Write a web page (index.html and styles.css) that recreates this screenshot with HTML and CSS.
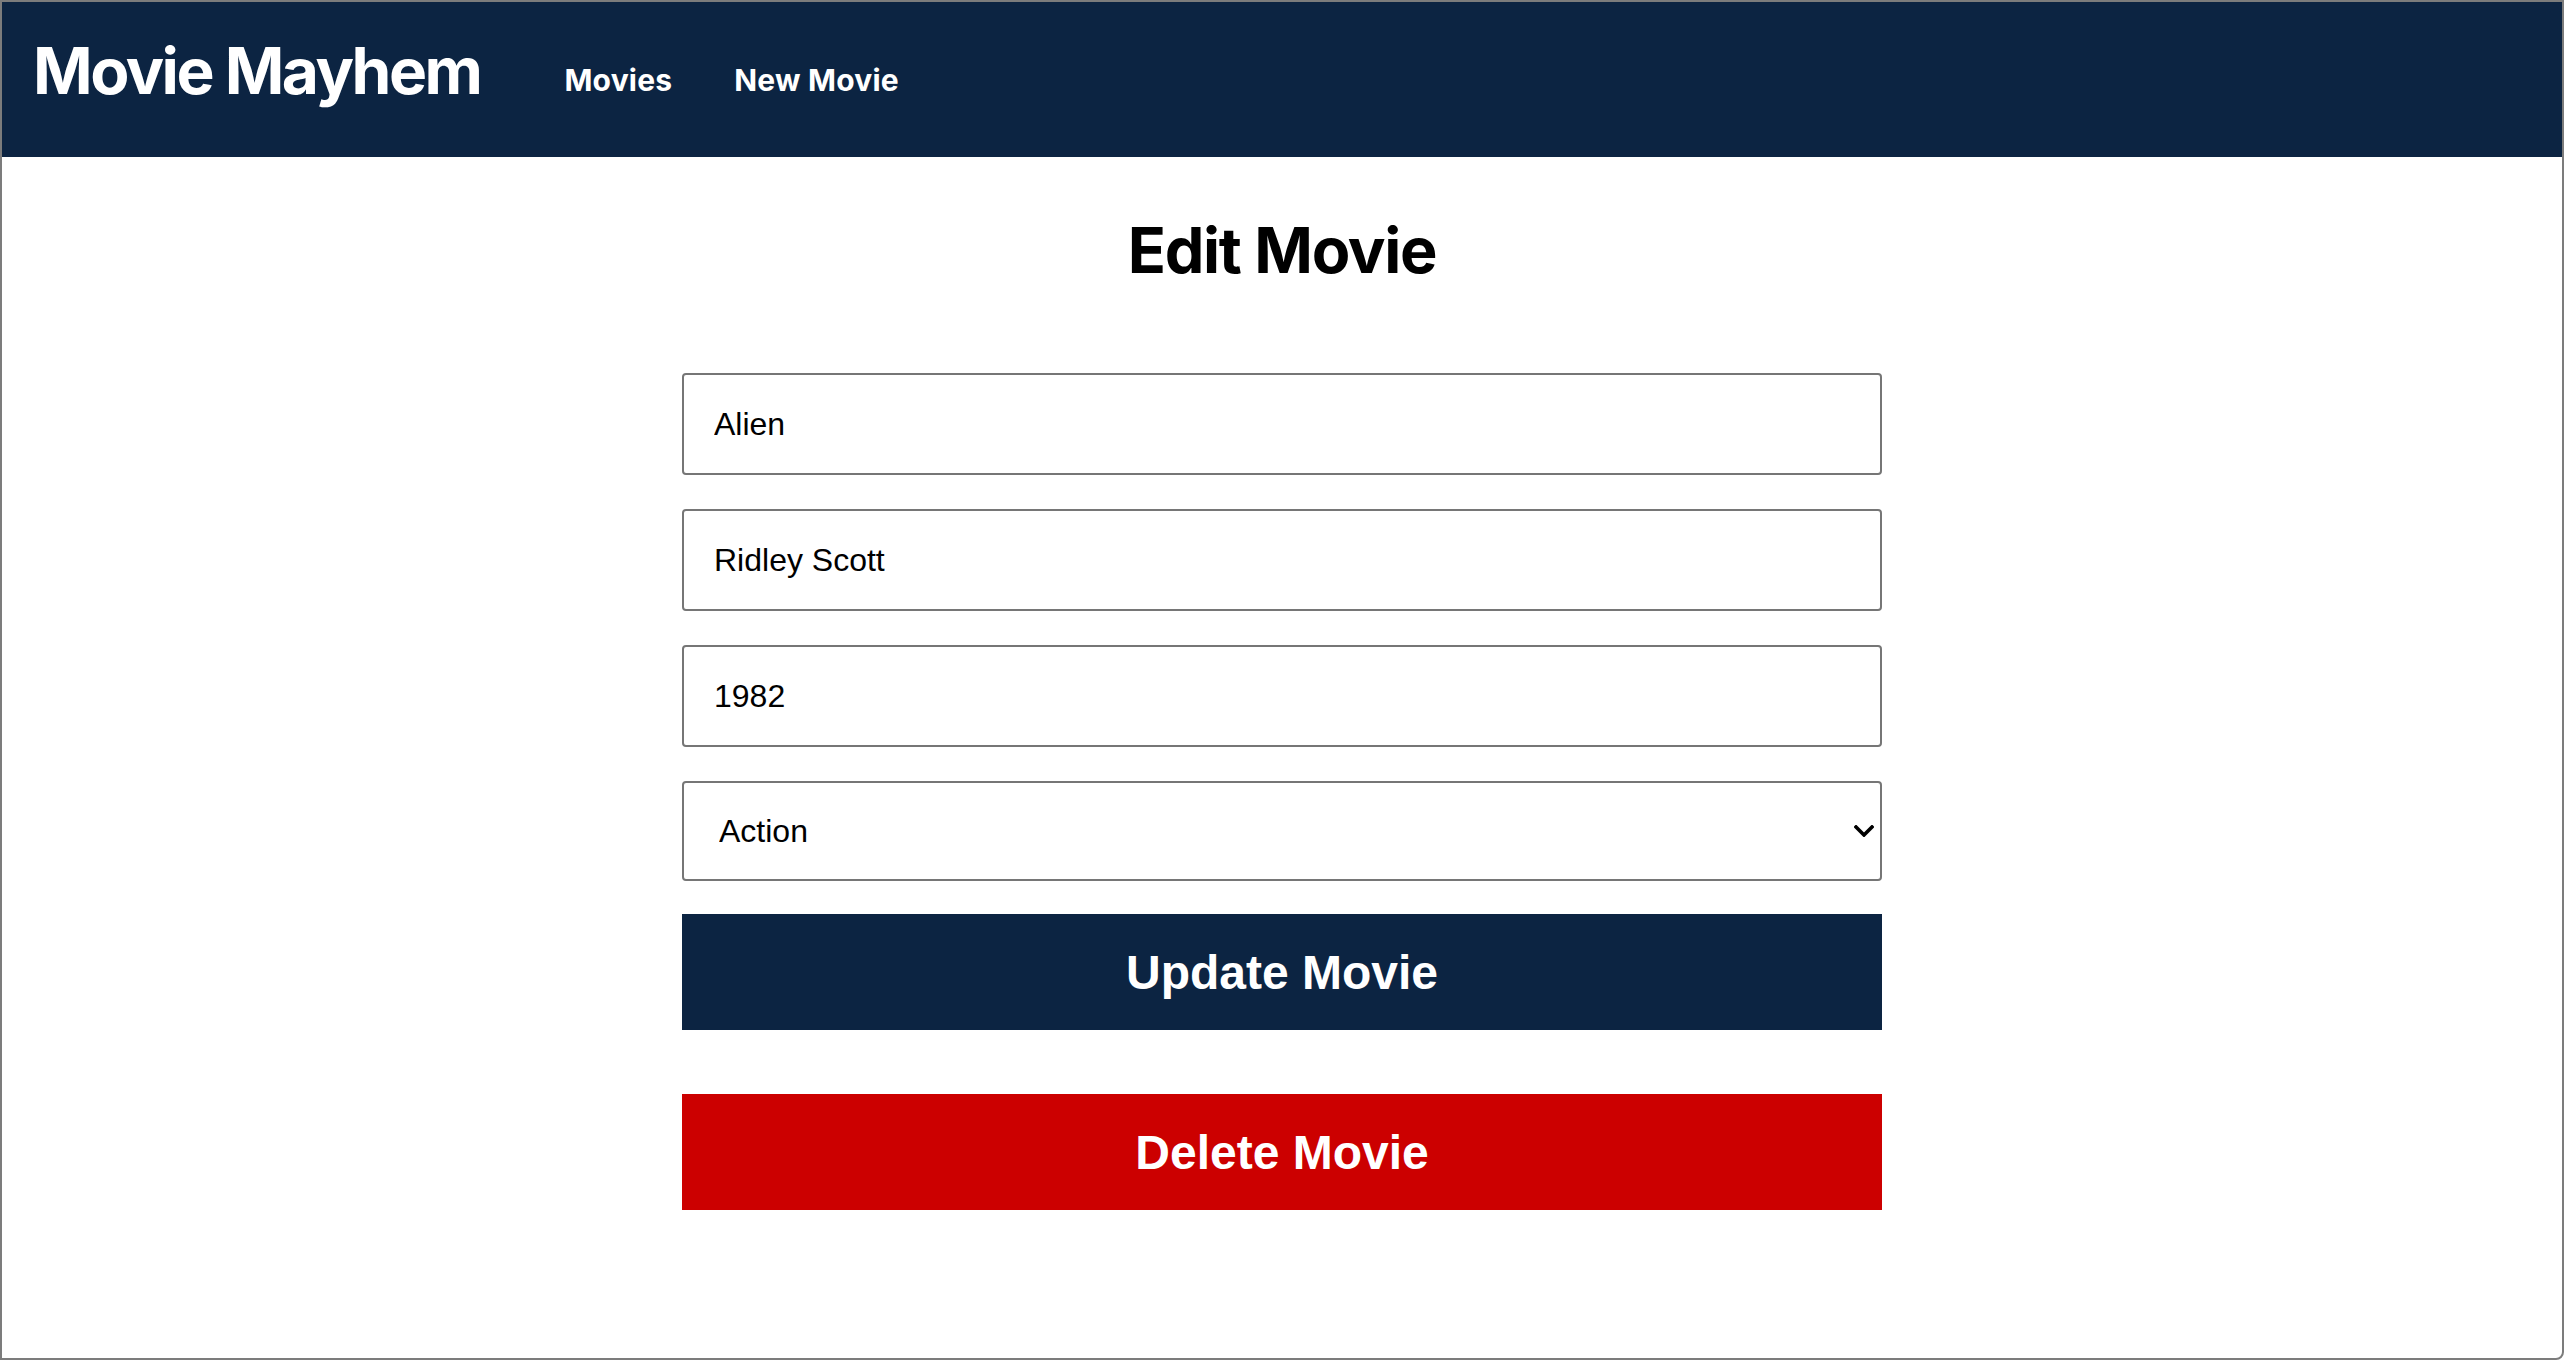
FILE: index.html
```html
<!DOCTYPE html>
<html lang="en">
<head>
<meta charset="utf-8">
<title>Movie Mayhem</title>
<link rel="stylesheet" href="styles.css">
</head>
<body>
<div class="frame">
  <header class="topbar">
    <a class="brand" href="#">Movie Mayhem</a>
    <nav class="nav">
      <a class="nav-link" href="#">Movies</a>
      <a class="nav-link" href="#">New Movie</a>
    </nav>
  </header>
  <main class="page">
    <h1 class="page-title">Edit Movie</h1>
    <form class="movie-form">
      <input class="field" type="text" value="Alien">
      <input class="field" type="text" value="Ridley Scott">
      <input class="field" type="text" value="1982">
      <div class="select-wrap">
        <select class="field select">
          <option selected>Action</option>
          <option>Comedy</option>
          <option>Drama</option>
          <option>Horror</option>
          <option>Sci-Fi</option>
        </select>
        <svg class="chevron" width="20" height="12" viewBox="0 0 20 12" aria-hidden="true">
          <path d="M2 2 L10 10 L18 2" fill="none" stroke="#000" stroke-width="3.6" stroke-linecap="square"/>
        </svg>
      </div>
      <button class="btn btn-update" type="button">Update Movie</button>
    </form>
    <button class="btn btn-delete" type="button">Delete Movie</button>
  </main>
</div>
</body>
</html>
```

FILE: styles.css
```css
* {
  box-sizing: border-box;
}

html, body {
  margin: 0;
  padding: 0;
  background: #ffffff;
}

.frame {
  width: 2564px;
  height: 1360px;
  border: 2px solid #7c7c7c;
  border-bottom-right-radius: 8px;
  overflow: hidden;
  background: #ffffff;
  font-family: Inter, "Liberation Sans", sans-serif;
}

.topbar {
  height: 155px;
  background: #0c2442;
  display: flex;
  align-items: flex-start;
  padding: 37px 0 0 31px;
}

.brand {
  color: #ffffff;
  text-decoration: none;
  font-weight: 700;
  font-size: 64px;
  line-height: 64px;
  letter-spacing: -2.5px;
}

.nav {
  display: flex;
  gap: 62px;
  margin-left: 84px;
  margin-top: 26px;
}

.nav-link {
  color: #ffffff;
  text-decoration: none;
  font-weight: 700;
  font-size: 30px;
  line-height: 30px;
  letter-spacing: 0.2px;
}

.page {
  width: 1200px;
  margin: 0 auto;
  padding-top: 61px;
}

.page-title {
  margin: 0;
  text-align: center;
  font-size: 63px;
  line-height: 64px;
  font-weight: 700;
  color: #000000;
  letter-spacing: -1.3px;
}

.movie-form {
  margin-top: 91px;
  display: flex;
  flex-direction: column;
  gap: 34px;
}

.field {
  display: block;
  width: 100%;
  height: 102px;
  margin: 0;
  border: 2px solid #767676;
  border-radius: 4px;
  background: #ffffff;
  padding: 0 0 0 30px;
  font-family: "Liberation Sans", Arial, sans-serif;
  font-size: 32px;
  color: #000000;
  outline: none;
}

.select-wrap {
  position: relative;
}

.select {
  height: 100px;
  appearance: none;
  -webkit-appearance: none;
  padding-left: 35px;
}

.chevron {
  position: absolute;
  right: 8px;
  top: 44px;
  pointer-events: none;
}

.btn {
  display: block;
  width: 100%;
  height: 116px;
  border: none;
  border-radius: 0;
  color: #ffffff;
  font-family: "Liberation Sans", Arial, sans-serif;
  font-weight: 700;
  font-size: 48px;
  cursor: pointer;
}

.btn-update {
  background: #0c2442;
  margin-top: -1px;
}

.btn-delete {
  background: #cc0000;
  margin-top: 64px;
}
```
